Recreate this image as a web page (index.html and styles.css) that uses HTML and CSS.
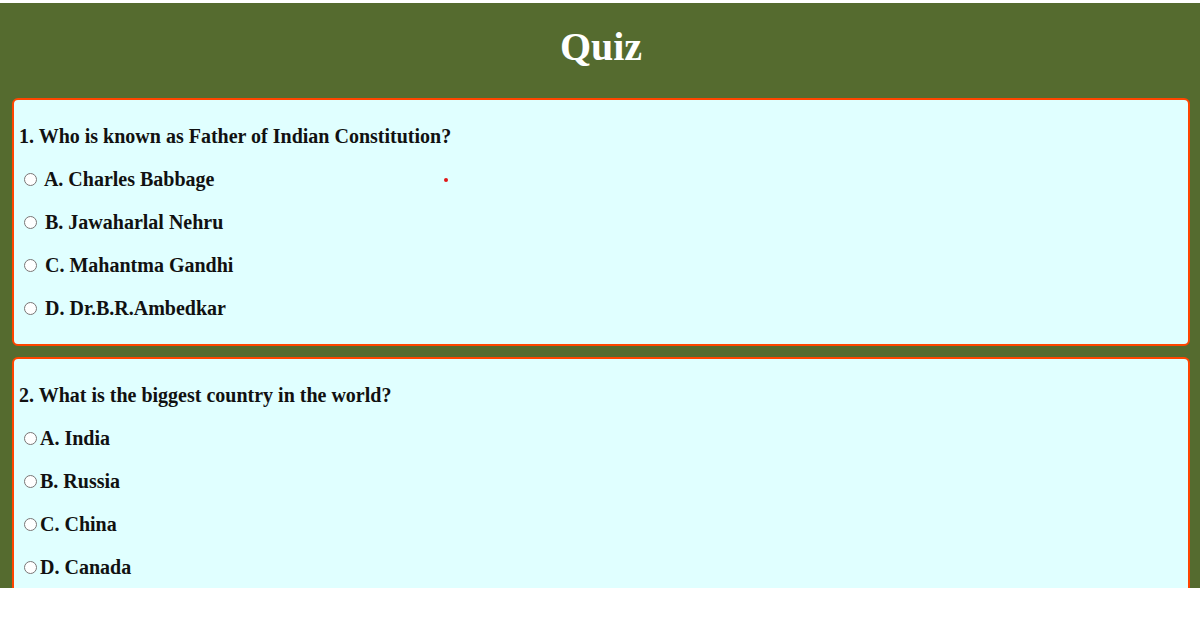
FILE: index.html
```html
<!DOCTYPE html>
<html>
<head>
<meta charset="utf-8">
<title>Quiz</title>
<link rel="stylesheet" href="styles.css">
</head>
<body>
<div class="page">
  <h1 class="title">Quiz</h1>
  <div class="card">
    <p class="question">1. Who is known as Father of Indian Constitution?</p>
    <p class="option"><input type="radio" name="q1"> <label>A. Charles Babbage</label></p>
    <p class="option"><input type="radio" name="q1"> <label>B. Jawaharlal Nehru</label></p>
    <p class="option"><input type="radio" name="q1"> <label>C. Mahantma Gandhi</label></p>
    <p class="option"><input type="radio" name="q1"> <label>D. Dr.B.R.Ambedkar</label></p>
    <span class="dot"></span>
  </div>
  <div class="card">
    <p class="question">2. What is the biggest country in the world?</p>
    <p class="option"><input type="radio" name="q2"><label>A. India</label></p>
    <p class="option"><input type="radio" name="q2"><label>B. Russia</label></p>
    <p class="option"><input type="radio" name="q2"><label>C. China</label></p>
    <p class="option"><input type="radio" name="q2"><label>D. Canada</label></p>
  </div>
</div>
</body>
</html>
```
FILE: styles.css
```css
html, body {
  margin: 0;
  padding: 0;
  background: #ffffff;
}
body {
  padding-top: 3px;
  font-family: "Liberation Serif", "Times New Roman", serif;
}
.page {
  background: #556b2f;
  height: 585px;
  overflow: hidden;
  padding: 0 10px 0 12px;
}
.title {
  margin: 0;
  padding: 21px 0 28px;
  text-align: center;
  color: #ffffff;
  font-size: 40px;
  font-weight: bold;
  line-height: 46px;
}
.card {
  position: relative;
  background: #e0ffff;
  border: 2px solid #ff4500;
  border-radius: 6px;
  padding: 5px 5px 4px;
  margin-bottom: 11px;
}
.card p {
  margin: 20px 0;
  font-size: 20px;
  font-weight: bold;
  color: #111111;
  line-height: 23px;
}
.option input {
  margin: 3px 3px 0 5px;
  width: 13px;
  height: 13px;
  vertical-align: 0;
}
.dot {
  position: absolute;
  left: 430px;
  top: 78px;
  width: 4px;
  height: 4px;
  border-radius: 50%;
  background: #e01818;
}
```
